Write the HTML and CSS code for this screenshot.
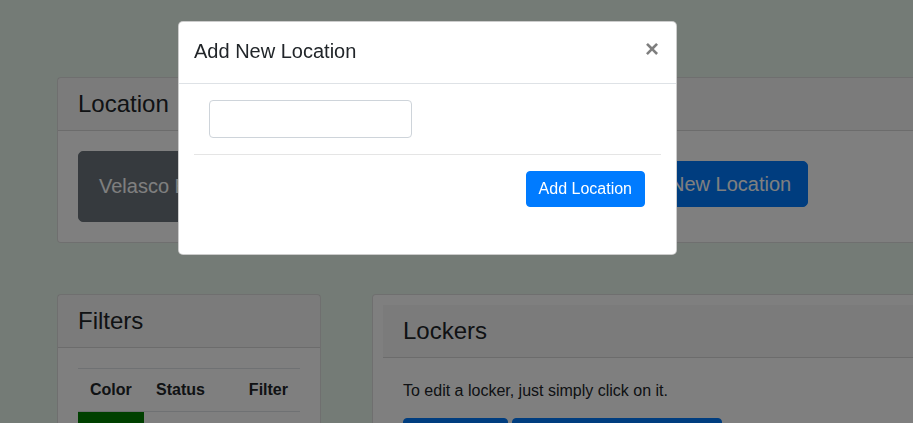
FILE: index.html
```html
<!DOCTYPE html>
<html>
<head>
<meta charset="utf-8">
<link rel="stylesheet" href="styles.css">
</head>
<body>
<div class="page">
  <div class="card location-card">
    <div class="card-header"><h3>Location</h3></div>
    <div class="card-body loc-body">
      <button class="btn btn-secondary btn-xl">Velasco Elementary</button>
      <span class="loc-gap"></span>
      <button class="btn btn-primary btn-lg new-loc">New Location</button>
    </div>
  </div>

  <div class="row">
    <div class="card filters-card">
      <div class="card-header"><h3>Filters</h3></div>
      <div class="card-body">
        <table class="table">
          <thead>
            <tr><th class="c1">Color</th><th class="c2">Status</th><th class="c3">Filter</th></tr>
          </thead>
          <tbody>
            <tr><td class="swatch"></td><td></td><td></td></tr>
          </tbody>
        </table>
      </div>
    </div>
    <div class="card lockers-card">
      <div class="inner">
        <div class="card-header"><h3>Lockers</h3></div>
        <div class="card-body">
          <p class="hint">To edit a locker, just simply click on it.</p>
          <div class="btns">
            <button class="btn btn-primary b1" aria-label="Add Locker"></button>
            <button class="btn btn-primary b2" aria-label="Add Multiple Lockers"></button>
          </div>
        </div>
      </div>
    </div>
  </div>
</div>

<div class="backdrop"></div>
<div class="modal">
  <div class="modal-header">
    <h5 class="modal-title">Add New Location</h5>
    <span class="close">&times;</span>
  </div>
  <div class="modal-body">
    <input class="form-control" type="text">
    <hr class="sep">
    <div class="actions">
      <button class="btn btn-primary">Add Location</button>
    </div>
  </div>
</div>
</body>
</html>
```
FILE: styles.css
```css
* { box-sizing: border-box; }
html, body { margin: 0; padding: 0; }
body {
  background: #e9f6ec;
  font-family: "Liberation Sans", Arial, sans-serif;
  font-size: 16px;
  line-height: 1.5;
  color: #212529;
  overflow: hidden;
  width: 913px;
  height: 423px;
}
.page {
  padding: 77px 0 0 57px;
  width: 1200px;
}
.card {
  background: #fff;
  border: 1px solid rgba(0,0,0,.125);
  border-radius: 4px;
}
.card-header {
  background: rgba(0,0,0,.03);
  border-bottom: 1px solid rgba(0,0,0,.125);
  padding: 12px 20px;
}
.card-header h3 {
  margin: 0;
  font-size: 24px;
  font-weight: 400;
  line-height: 28px;
}
.card-body { padding: 20px; }
.location-card { width: 1000px; }
.loc-body {
  display: flex;
  align-items: flex-start;
}
.loc-gap { width: 16px; flex: 0 0 auto; }
.btn {
  font-family: inherit;
  display: inline-block;
  border: 1px solid transparent;
  border-radius: 4px;
  font-size: 16px;
  line-height: 24px;
  padding: 5px 12px;
  color: #fff;
  cursor: pointer;
  white-space: nowrap;
}
.btn-primary { background: #007bff; border-color: #007bff; }
.btn-secondary { background: #6c757d; border-color: #6c757d; }
.btn-lg { font-size: 20px; line-height: 30px; padding: 7px 16px; border-radius: 5px; }
.btn-xl { font-size: 20px; line-height: 30px; padding: 19px 20px 20px; border-radius: 5px; width: 559px; text-align: left; }
.new-loc { margin-top: 10px; }

.row {
  display: flex;
  gap: 51px;
  margin-top: 51px;
  align-items: flex-start;
}
.filters-card { width: 264px; flex: 0 0 auto; }
.table {
  width: 100%;
  border-collapse: collapse;
}
.table th, .table td {
  border-top: 1px solid #dee2e6;
  padding: 9px 12px 9px;
  text-align: left;
  vertical-align: top;
  height: 43px;
}
.table thead th { border-bottom: 1px solid #dee2e6; font-weight: 700; }
.table th.c1 { width: 66px; }
.table th.c2 { width: 93px; }
.table th.c3 { width: 63px; }
.table td.swatch { background: #008000; }
.lockers-card {
  width: 700px;
  flex: 0 0 auto;
  padding: 10px;
  height: 200px;
}
.hint { margin: 1px 0 15px; }
.btns { display: flex; gap: 4px; }
.b1 { width: 105px; height: 38px; }
.b2 { width: 210px; height: 38px; }

.backdrop {
  position: fixed;
  inset: 0;
  background: rgba(0,0,0,.5);
}
.modal {
  position: fixed;
  left: 178px;
  top: 21px;
  width: 499px;
  background: #fff;
  border: 1px solid rgba(0,0,0,.2);
  border-radius: 5px;
}
.modal-header {
  display: flex;
  align-items: flex-start;
  padding: 16px 16px 15px 15px;
  border-bottom: 1px solid #dee2e6;
}
.modal-title {
  margin: -2px 0 2px;
  font-size: 20px;
  font-weight: 400;
  line-height: 30px;
  flex: 1;
}
.close {
  font-size: 24px;
  font-weight: 700;
  line-height: 1;
  color: #000;
  opacity: .5;
  text-shadow: 0 1px 0 #fff;
  margin-top: -1px;
  margin-right: 1px;
}
.modal-body {
  padding: 16px 15px 47px;
}
.form-control {
  display: block;
  margin-left: 15px;
  width: 203px;
  height: 38px;
  border: 1px solid #ced4da;
  border-radius: 4px;
  font-family: inherit;
  font-size: 16px;
  padding: 6px 12px;
}
.sep {
  margin: 16px 0;
  border: 0;
  border-top: 1px solid rgba(0,0,0,.1);
}
.actions {
  display: flex;
  justify-content: flex-end;
  padding-right: 16px;
}
.actions .btn { padding: 5px 12px; }
```
